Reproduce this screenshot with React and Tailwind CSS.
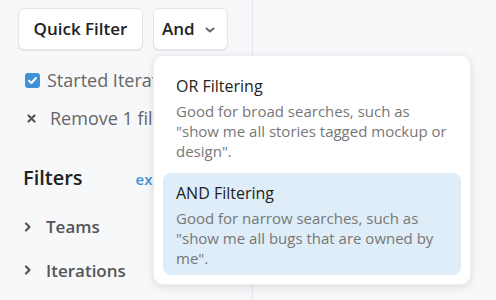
import { useState } from "react"

const FILTER_MODES = [
    {
        label: "OR Filtering",
        description: "Good for broad searches, such as \"show me all stories tagged mockup or design\".",
        value: "or"
    },
    {
        label: "AND Filtering",
        description: "Good for narrow searches, such as \"show me all bugs that are owned by me\".",
        value: "and"
    }
]

const ChevronDown = () => (
    <svg width="10" height="10" viewBox="0 0 10 10" className="ml-[10px] mt-[2px]">
        <path d="M1.5 3.5 L5 6.5 L8.5 3.5" fill="none" stroke="#666" strokeWidth="2" strokeLinecap="round" strokeLinejoin="round" />
    </svg>
)

const ChevronRight = () => (
    <svg width="8" height="10" viewBox="0 0 8 10">
        <path d="M2 1.5 L5.5 5 L2 8.5" fill="none" stroke="#555" strokeWidth="2.2" strokeLinecap="round" strokeLinejoin="round" />
    </svg>
)

const App = () => {
    const [mode, setMode] = useState("and")

    return (
        <div className="relative w-[496px] h-[300px] overflow-hidden bg-[#f7f8fa] font-['Open_Sans',sans-serif]">
            {/* left panel */}
            <div className="w-[253px] h-full border-r border-r-[#e4e6ea] pl-[18px] pt-[8px]">
                <div className="flex gap-[10px]">
                    <button className="w-[125px] h-[42px] bg-white border border-[#e2e4e8] rounded-[6px] shadow-[0_1px_1px_rgba(0,0,0,0.08)] text-[17px] font-semibold text-[#222]">
                        Quick Filter
                    </button>
                    <button className="w-[75px] h-[42px] pl-[8px] bg-white border border-[#e2e4e8] rounded-[6px] shadow-[0_1px_1px_rgba(0,0,0,0.08)] text-[17px] font-semibold text-[#222] flex items-center">
                        And
                        <ChevronDown />
                    </button>
                </div>

                <div className="mt-[17px] flex items-center whitespace-nowrap">
                    <div className="ml-[7px] w-[15px] h-[15px] rounded-[3px] bg-[#3d92d8] flex items-center justify-center">
                        <svg width="11" height="11" viewBox="0 0 11 11">
                            <path d="M2 5.8 L4.4 8 L9 3" fill="none" stroke="white" strokeWidth="2" strokeLinecap="round" strokeLinejoin="round" />
                        </svg>
                    </div>
                    <span className="ml-[7px] text-[18px] text-[#666]">Started Iterations</span>
                </div>

                <div className="mt-[11px] flex items-center whitespace-nowrap">
                    <svg width="9" height="9" viewBox="0 0 9 9" className="ml-[9px]">
                        <path d="M1.5 1.5 L7.5 7.5 M7.5 1.5 L1.5 7.5" stroke="#555" strokeWidth="2.2" strokeLinecap="round" />
                    </svg>
                    <span className="ml-[14px] text-[18px] text-[#666]">Remove 1 filter</span>
                </div>

                <div className="mt-[31px] flex items-baseline whitespace-nowrap">
                    <span className="ml-[5px] text-[20px] font-semibold text-[#222]">Filters</span>
                    <span className="ml-[53px] text-[15px] font-semibold text-[#3d92d8]">expand all</span>
                </div>

                <div className="mt-[21px] flex items-center">
                    <div className="ml-[6px] w-[10px]"><ChevronRight /></div>
                    <span className="ml-[12px] text-[17px] font-semibold text-[#555]">Teams</span>
                </div>
                <div className="mt-[18px] flex items-center">
                    <div className="ml-[6px] w-[10px]"><ChevronRight /></div>
                    <span className="ml-[12px] text-[17px] font-semibold text-[#555]">Iterations</span>
                </div>
            </div>

            {/* dropdown menu */}
            <div className="absolute left-[153px] top-[55px] w-[318px] bg-white rounded-[10px] border border-[#eceef1] shadow-[0_2px_8px_rgba(0,0,0,0.12)] p-[9px]">
                {FILTER_MODES.map(option => (
                    <div
                        key={option.value}
                        onClick={() => setMode(option.value)}
                        className={`rounded-[8px] px-[13px] ${option.value === "or" ? "pt-[10px] pb-[4px]" : "pt-[9px] pb-[7px] mt-[8px]"} ${mode === option.value ? "bg-[#deedf8]" : ""}`}
                    >
                        <div className="text-[16px] text-[#222] leading-[22px]">{option.label}</div>
                        <div className="text-[15px] text-[#777] leading-[20px] mt-[4px]">{option.description}</div>
                    </div>
                ))}
            </div>
        </div>
    )
}

export default App
